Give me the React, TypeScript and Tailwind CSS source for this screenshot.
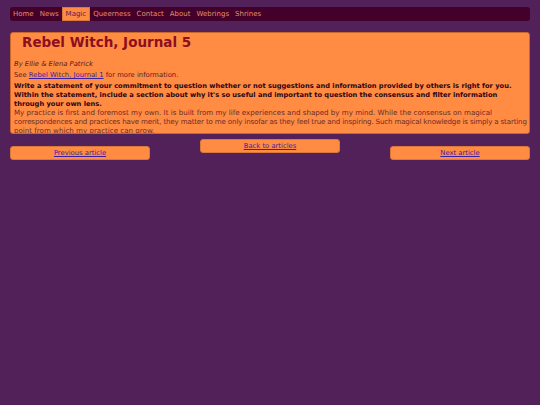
const navItems = ["Home", "News", "Magic", "Queerness", "Contact", "About", "Webrings", "Shrines"];

export default function App() {
  return (
    <div
      className="min-h-[405px] bg-[#52215a] px-[10px] pt-[7px] text-[6.8px] leading-[9px]"
      style={{ fontFamily: '"DejaVu Sans", Verdana, sans-serif' }}
    >
      <nav className="flex h-[14px] items-stretch rounded-[3px] bg-[#43002b]">
        {navItems.map((item) => (
          <a
            key={item}
            href="#"
            className={
              item === "Magic"
                ? "flex items-center border border-[#d9783a] bg-[#ff8c42] px-[3px] text-[7px] text-[#52215a]"
                : "flex items-center px-[3px] text-[7px] text-[#e0916a]"
            }
          >
            {item}
          </a>
        ))}
      </nav>

      <main className="mt-[11px] h-[102px] overflow-hidden rounded-[3px] border border-[#c8682d] bg-[#ff8c42] pl-[3px] pr-[2px] pt-[1px]">
        <h1 className="ml-[8px] text-[13.5px] font-bold leading-[16px] text-[#8b0f1f]">Rebel Witch, Journal 5</h1>
        <p className="mt-[10px] italic text-[#5a1a22]">By Ellie &amp; Elena Patrick</p>
        <p className="mt-[2px] text-[#5a1a22]">
          See{" "}
          <a href="#" className="text-[#3d1fa0] underline">
            Rebel Witch, Journal 1
          </a>{" "}
          for more information.
        </p>
        <p className="mt-[2px] text-[6.7px] font-bold text-[#2e0514]">
          Write a statement of your commitment to question whether or not suggestions and information provided by others is right for you.
          Within the statement, include a section about why it's so useful and important to question the consensus and filter information
          through your own lens.
        </p>
        <p className="-mt-[1px] whitespace-nowrap text-[7.1px] text-[#6b2a2a]">
          <span className="block">
            My practice is first and foremost my own. It is built from my life experiences and shaped by my mind. While the consensus on magical
          </span>
          <span className="block tracking-[-0.16px]">
            correspondences and practices have merit, they matter to me only insofar as they feel true and inspiring. Such magical knowledge is simply a starting
          </span>
          <span className="block">point from which my practice can grow.</span>
        </p>
      </main>

      <div className="mt-[5px] flex items-start justify-between">
        <a href="#" className="mt-[7px] flex h-[14px] w-[140px] items-center justify-center rounded-[3px] border border-[#d9783a] bg-[#ff8c42] text-[#3d1fa0] underline">
          Previous article
        </a>
        <a href="#" className="flex h-[14px] w-[140px] items-center justify-center rounded-[3px] border border-[#d9783a] bg-[#ff8c42] text-[#3d1fa0] underline">
          Back to articles
        </a>
        <a href="#" className="mt-[7px] flex h-[14px] w-[140px] items-center justify-center rounded-[3px] border border-[#d9783a] bg-[#ff8c42] text-[#3d1fa0] underline">
          Next article
        </a>
      </div>
    </div>
  );
}
